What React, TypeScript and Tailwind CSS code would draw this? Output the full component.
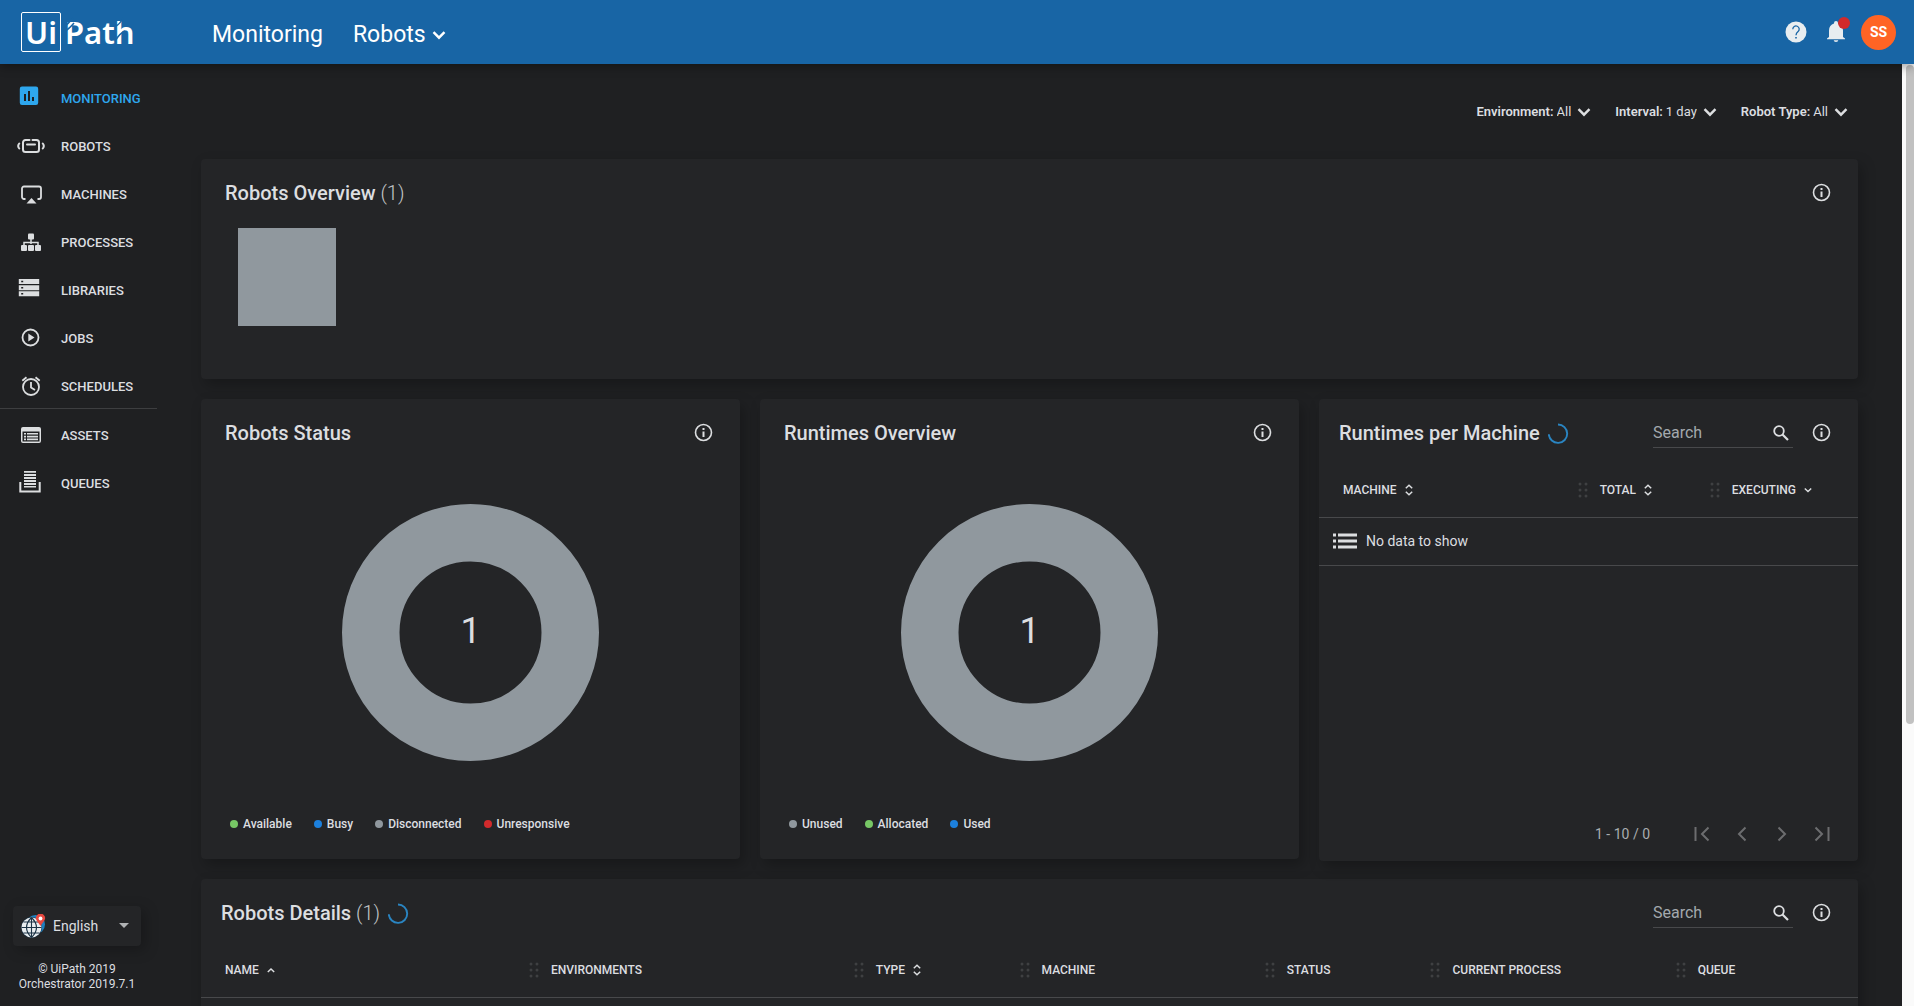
import type { ReactNode } from "react";

type Sort = "none" | "both" | "asc" | "desc";

type Column = {
	label: string;
	width: string;
	sort: Sort;
};

const machineColumns: Column[] = [
	{ label: "MACHINE", width: "w-[48%]", sort: "both" },
	{ label: "TOTAL", width: "w-[24.5%]", sort: "both" },
	{ label: "EXECUTING", width: "w-[27.5%]", sort: "desc" },
];

const robotColumns: Column[] = [
	{ label: "NAME", width: "w-[19.8%]", sort: "asc" },
	{ label: "ENVIRONMENTS", width: "w-[19.6%]", sort: "none" },
	{ label: "TYPE", width: "w-[10%]", sort: "both" },
	{ label: "MACHINE", width: "w-[14.8%]", sort: "none" },
	{ label: "STATUS", width: "w-[10%]", sort: "none" },
	{ label: "CURRENT PROCESS", width: "w-[14.8%]", sort: "none" },
	{ label: "QUEUE", width: "w-[11%]", sort: "none" },
];

const statusLegend = [
	{ label: "Available", color: "bg-[#77c765]" },
	{ label: "Busy", color: "bg-[#1c80dd]" },
	{ label: "Disconnected", color: "bg-[#90989e]" },
	{ label: "Unresponsive", color: "bg-[#d12a2c]" },
];

const runtimesLegend = [
	{ label: "Unused", color: "bg-[#90989e]" },
	{ label: "Allocated", color: "bg-[#77c765]" },
	{ label: "Used", color: "bg-[#1c80dd]" },
];

const mainNav = [
	{
		label: "MONITORING",
		active: true,
		icon: (
			<path
				fillRule="evenodd"
				d="M5 1.500h14a2.200 2.200 0 0 1 2.200 2.200v14a2.200 2.200 0 0 1-2.200 2.200H5a2.200 2.200 0 0 1-2.200-2.200v-14A2.200 2.200 0 0 1 5 1.500zM7 9v7h2V9zm4-3v10h2V6zm4 6v4h2v-4z"
			/>
		),
	},
	{
		label: "ROBOTS",
		icon: (
			<g fill="none" stroke="currentColor" strokeWidth="2" strokeLinecap="round">
				<path d="M12.500 7H8.500a2.500 2.500 0 0 0-2.500 2.500v7A2.500 2.500 0 0 0 8.500 19h11a2.500 2.500 0 0 0 2.500-2.500v-7A2.500 2.500 0 0 0 19.500 7h-4" />
				<path d="M10 11.500h8" />
				<path d="M2.200 10.500q-2 2.500 0 5M25.800 10.500q2 2.500 0 5" />
			</g>
		),
	},
	{
		label: "MACHINES",
		icon: (
			<>
				<path
					d="M8.500 18H7a2 2 0 0 1-2-2V7.500a2 2 0 0 1 2-2h15a2 2 0 0 1 2 2V16a2 2 0 0 1-2 2h-1.500"
					fill="none"
					stroke="currentColor"
					strokeWidth="1.800"
				/>
				<path d="M14.500 17l5 5.500h-10z" />
			</>
		),
	},
	{
		label: "PROCESSES",
		icon: (
			<>
				<path
					d="M14 9v6M7 16v-2.500h14V16"
					fill="none"
					stroke="currentColor"
					strokeWidth="1.500"
				/>
				<rect x="11" y="4.500" width="6" height="6" rx="1" />
				<rect x="4" y="16" width="6" height="6" rx="1" />
				<rect x="11" y="16" width="6" height="6" rx="1" />
				<rect x="18" y="16" width="6" height="6" rx="1" />
			</>
		),
	},
	{
		label: "LIBRARIES",
		icon: (
			<path
				fillRule="evenodd"
				d="M1.800 2h20.400v5H1.800zm2.400 1.700v1.600h2V3.700zM1.800 8.200h20.400v5H1.800zm2.400 1.700v1.600h2V9.900zM1.800 14.300h20.400v5H1.800zm2.400 1.700v1.600h2V16z"
			/>
		),
	},
	{
		label: "JOBS",
		icon: (
			<>
				<circle
					cx="13.500"
					cy="12.500"
					r="8"
					fill="none"
					stroke="currentColor"
					strokeWidth="1.800"
				/>
				<path d="M11.300 8.500l6.200 4-6.200 4z" />
			</>
		),
	},
	{
		label: "SCHEDULES",
		icon: (
			<g fill="none" stroke="currentColor" strokeWidth="1.800">
				<circle cx="14" cy="14" r="8" />
				<path d="M14 9v5.500l4 2.500" />
				<path d="M5.300 7.800l4.200-3.500M22.700 7.800l-4.200-3.500" />
			</g>
		),
	},
];

const assetNav = [
	{
		label: "ASSETS",
		icon: (
			<>
				<path
					fillRule="evenodd"
					d="M6 5h16a2 2 0 0 1 2 2v12a2 2 0 0 1-2 2H6a2 2 0 0 1-2-2V7a2 2 0 0 1 2-2zM5.500 9.500v10h17v-10z"
				/>
				<path d="M7 11h2v1.600H7zm3 0h11v1.600H10zM7 13.800h2v1.600H7zm3 0h11v1.600H10zM7 16.600h2v1.600H7zm3 0h11v1.600H10z" />
			</>
		),
	},
	{
		label: "QUEUES",
		icon: (
			<path d="M7 1h12v1.800H7zm0 3h12v1.900H7zm0 3h12v1.900H7zm0 3h12v1.900H7zm0 3h12v1.900H7zm0 3h12v1.500H7zM2.300 12h2v8.500h17.400V12h2v10.500H2.300z" />
		),
	},
];

const filters = [
	{ id: "environment", label: "Environment:", value: "All" },
	{ id: "interval", label: "Interval:", value: "1 day" },
	{ id: "robot-type", label: "Robot Type:", value: "All" },
];

const pageButtons = [
	{ label: "First page", d: "M5.500 5v14M18.500 5.500L12 12l6.500 6.500" },
	{ label: "Previous page", d: "M15.500 5.500L9 12l6.500 6.500" },
	{ label: "Next page", d: "M8.500 5.500L15 12l-6.500 6.500" },
	{ label: "Last page", d: "M18.500 5v14M5.500 5.500L12 12l-6.500 6.500" },
];

function ChevronDown() {
	return (
		<svg
			className="shrink-0 pointer-events-none"
			width="14"
			height="14"
			viewBox="0 0 14 14"
			fill="none"
			aria-hidden="true"
		>
			<path d="M1.500 4.200L7 9.700l5.500-5.500" stroke="currentColor" strokeWidth="2.400" />
		</svg>
	);
}

function SortIcon({ sort }: { sort: Sort }) {
	if (sort === "none") return null;
	return (
		<svg
			width="12"
			height="12"
			viewBox="0 0 12 12"
			fill="none"
			stroke="currentColor"
			strokeWidth="1.500"
			aria-hidden="true"
		>
			{sort === "both" && <path d="M2.800 4.300L6 1.300l3.200 3M2.800 7.700l3.200 3 3.200-3" />}
			{sort === "asc" && <path d="M2.800 8L6 5l3.200 3" />}
			{sort === "desc" && <path d="M2.800 4.500L6 7.500l3.200-3" />}
		</svg>
	);
}

function DragHandle() {
	return (
		<svg
			className="text-[#3f4042]"
			width="10"
			height="16"
			viewBox="0 0 10 16"
			fill="currentColor"
			aria-hidden="true"
		>
			{[2, 8, 14].map((y) => (
				<g key={y}>
					<circle cx="2" cy={y} r="1.500" />
					<circle cx="8" cy={y} r="1.500" />
				</g>
			))}
		</svg>
	);
}

function Spinner() {
	return (
		<svg width="22" height="22" viewBox="0 0 22 22" fill="none" aria-label="Loading">
			<path d="M10 1.500a9.200 9.200 0 1 1-9.200 9.800" stroke="#2a85c2" strokeWidth="1.900" />
		</svg>
	);
}

function InfoButton() {
	return (
		<button type="button" aria-label="Info" className="flex items-center justify-center w-6 h-6">
			<svg width="20" height="20" viewBox="0 0 20 20" aria-hidden="true">
				<circle cx="9.500" cy="9.500" r="8" fill="none" stroke="currentColor" strokeWidth="1.600" />
				<path d="M8.500 8.500h2v5.500h-2zM8.500 5h2v2h-2z" fill="currentColor" />
			</svg>
		</button>
	);
}

function SearchBox({ id }: { id: string }) {
	return (
		<div className="flex items-center w-[140px] h-[30px] pr-[3px] border-b border-[#48494b]">
			<input
				id={id}
				type="text"
				placeholder="Search"
				aria-label="Search"
				className="min-w-0 flex-1 bg-transparent text-base leading-6 outline-none placeholder:text-[#a3a9ad]"
			/>
			<svg width="18" height="18" viewBox="0 0 18 18" fill="none" aria-hidden="true">
				<circle cx="7" cy="7" r="4.800" stroke="currentColor" strokeWidth="1.800" />
				<path d="M10.500 10.500l5.500 5.500" stroke="currentColor" strokeWidth="2.200" />
			</svg>
		</div>
	);
}

function Panel({
	title,
	count,
	loading,
	searchId,
	className,
	children,
}: {
	title: string;
	count?: number;
	loading?: boolean;
	searchId?: string;
	className: string;
	children: ReactNode;
}) {
	return (
		<section
			className={`flex flex-col rounded bg-[#242527] shadow-[4px_6px_14px_rgba(0,0,0,0.25)] ${className}`}
		>
			<header
				className={`flex items-center h-12 mt-[10px] pr-6 ${searchId ? "pl-5" : "pl-6"}`}
			>
				<h2 className="text-xl leading-6 font-medium">
					{title}
					{count !== undefined && (
						<span className="font-light text-[#c3c5c7]"> ({count})</span>
					)}
				</h2>
				{loading && (
					<span className="ml-2 mt-0.5">
						<Spinner />
					</span>
				)}
				<div className="flex items-center gap-[17px] ml-auto">
					{searchId && <SearchBox id={searchId} />}
					<InfoButton />
				</div>
			</header>
			{children}
		</section>
	);
}

function TableHead({ columns }: { columns: Column[] }) {
	return (
		<thead>
			<tr className="h-[60px] border-b border-[#48494b]">
				{columns.map((col, i) => (
					<th
						key={col.label}
						scope="col"
						className={`p-0 pt-[7px] text-left text-xs font-medium ${col.width}`}
					>
						<div className={`flex items-center ${i === 0 ? "pl-6" : ""}`}>
							{i > 0 && (
								<span className="mr-3">
									<DragHandle />
								</span>
							)}
							<span className="mr-1.5 whitespace-nowrap">{col.label}</span>
							<SortIcon sort={col.sort} />
						</div>
					</th>
				))}
			</tr>
		</thead>
	);
}

function Donut({ value }: { value: number }) {
	return (
		<div className="grid place-items-center mt-[47px]">
			<svg
				className="col-start-1 row-start-1"
				width="258"
				height="258"
				viewBox="0 0 258 258"
				aria-hidden="true"
			>
				<circle cx="128.500" cy="128.500" r="99.750" fill="none" stroke="#90989e" strokeWidth="57.500" />
			</svg>
			<span className="col-start-1 row-start-1 pb-1 text-4xl">{value}</span>
		</div>
	);
}

function Legend({ items }: { items: { label: string; color: string }[] }) {
	return (
		<ul className="flex gap-[22px] mt-auto mb-[27px] ml-[29px] text-xs leading-4 font-medium">
			{items.map((item) => (
				<li key={item.label} className="flex items-center gap-[5px]">
					<span className={`w-2 h-2 rounded-full ${item.color}`} />
					{item.label}
				</li>
			))}
		</ul>
	);
}

function NavItem({
	label,
	icon,
	active,
}: {
	label: string;
	icon: ReactNode;
	active?: boolean;
}) {
	return (
		<li>
			<a
				href="#"
				className={`flex items-center gap-4 h-12 pt-1.5 pl-[17px] text-[13px] font-medium ${active ? "text-[#2ea7ee]" : ""}`}
			>
				<svg
					width="28"
					height="28"
					viewBox="0 0 28 28"
					fill="currentColor"
					aria-hidden="true"
				>
					{icon}
				</svg>
				{label}
			</a>
		</li>
	);
}

function Logo() {
	return (
		<a
			href="#"
			className="relative flex items-center h-10 text-[31px] leading-10 font-semibold font-['Noto_Sans',sans-serif]"
		>
			<span className="flex items-center justify-center w-10 h-10 rounded-xs border border-white">
				Ui
			</span>
			<span className="ml-1">Path</span>
			<svg
				className="absolute left-10 top-0"
				width="76"
				height="40"
				viewBox="0 0 76 40"
				stroke="#1865a5"
				strokeWidth="1.500"
				aria-hidden="true"
			>
				<path d="M4 14q3-2 8-8M4 19q4-2 9-8M55 14q4-2 7-8M55 28q3-6 9-9" fill="none" />
			</svg>
		</a>
	);
}

function Header() {
	return (
		<header className="relative z-10 flex items-center h-16 shrink-0 bg-[#1865a5] text-white pl-[21px] pr-[18px] shadow-[0_2px_10px_rgba(0,0,0,0.4)]">
			<div className="w-[191px] shrink-0">
				<Logo />
			</div>
			<div className="flex items-center gap-[30px] pt-1.5 text-[23px] leading-7">
				<h1>Monitoring</h1>
				<button type="button" className="flex items-center gap-1.5">
					Robots
					<ChevronDown />
				</button>
			</div>
			<div className="flex items-center ml-auto">
				<button type="button" aria-label="Help" className="mr-4 text-[#e8edf0]">
					<svg width="24" height="24" viewBox="0 0 24 24" aria-hidden="true">
						<circle cx="12" cy="12" r="10.500" fill="currentColor" />
						<path
							d="M8.800 9.300a3.200 3.200 0 1 1 5.300 2.300c-1.300 1.100-2.100 1.800-2.100 3.700"
							fill="none"
							stroke="#1865a5"
							strokeWidth="1.300"
						/>
						<path d="M11.200 17h1.600v1.600h-1.600z" fill="#1865a5" />
					</svg>
				</button>
				<button type="button" aria-label="Notifications" className="relative mr-[13px] text-[#e8edf0]">
					<svg width="24" height="24" viewBox="0 0 24 24" fill="currentColor" aria-hidden="true">
						<path d="M12 22c1.300 0 2.200-.7 2.200-1.700H9.800c0 1 .9 1.700 2.200 1.700zM19 17V10.500c0-3.500-1.900-6.100-5-6.900V3a2 2 0 0 0-4 0v.6c-3.100.8-5 3.400-5 6.900V17l-2 1.500v.8h18v-.8z" />
					</svg>
					<span className="absolute -top-[3px] -right-0.5 w-3 h-3 rounded-full bg-[#d12a2c]" />
				</button>
				<button
					type="button"
					aria-label="Account"
					className="w-[35px] h-[35px] rounded-full bg-[#ff6424] text-sm font-bold"
				>
					SS
				</button>
			</div>
		</header>
	);
}

function Sidebar() {
	return (
		<aside className="flex flex-col w-[157px] shrink-0 pt-2 pb-[14px]">
			<nav>
				<ul className="border-b border-[#3d3e40]">
					{mainNav.map((item) => (
						<NavItem key={item.label} {...item} />
					))}
				</ul>
				<ul>
					{assetNav.map((item) => (
						<NavItem key={item.label} {...item} />
					))}
				</ul>
			</nav>
			<div className="relative mt-auto mx-[13px] w-32 h-10 rounded bg-[#242527] shadow-[4px_4px_14px_rgba(0,0,0,0.25)]">
				<svg
					className="absolute left-2 top-2 pointer-events-none"
					width="25"
					height="25"
					viewBox="0 0 25 25"
					aria-hidden="true"
				>
					<circle cx="14.500" cy="10.500" r="9.500" fill="#1d7fbd" />
					<circle cx="10.500" cy="13.500" r="10.500" fill="#1c3345" />
					<circle cx="10.500" cy="13.500" r="10" fill="#e9edf0" />
					<path
						d="M10.500 3.500v20M.5 13.500h20M2.500 8h16M2.500 19h16M10.500 3.500q-10 10 0 20M10.500 3.500q10 10 0 20"
						fill="none"
						stroke="#1c3345"
						strokeWidth="1.100"
					/>
					<path d="M19.500 12L15.800 6.700a4.500 4.500 0 1 1 7.400 0z" fill="#e8483f" />
					<circle cx="19.500" cy="4.500" r="1.900" fill="#fff" />
				</svg>
				<select
					id="language"
					aria-label="Language"
					className="w-full h-full pl-10 appearance-none bg-transparent text-sm outline-none"
				>
					<option>English</option>
				</select>
				<svg
					className="absolute right-3 top-[17px] pointer-events-none text-[#b0b2b4]"
					width="10"
					height="5"
					viewBox="0 0 10 5"
					fill="currentColor"
					aria-hidden="true"
				>
					<path d="M0 0h10L5 5z" />
				</svg>
			</div>
			<p className="mt-4 pr-[3px] text-xs leading-[15px] text-center">
				© UiPath 2019
				<br />
				Orchestrator 2019.7.1
			</p>
		</aside>
	);
}

function Paginator() {
	return (
		<div className="flex items-center justify-end h-[54px] mt-auto pr-4 text-sm text-[#a9adb0]">
			<span className="mr-8">1 - 10 / 0</span>
			{pageButtons.map((b) => (
				<button
					key={b.label}
					type="button"
					aria-label={b.label}
					className="flex items-center justify-center w-10 h-10 text-[#6c6d6f]"
				>
					<svg width="24" height="24" viewBox="0 0 24 24" fill="none" aria-hidden="true">
						<path d={b.d} stroke="currentColor" strokeWidth="2" />
					</svg>
				</button>
			))}
		</div>
	);
}

export default function App() {
	return (
		<div className="flex flex-col h-screen overflow-hidden bg-[#1f2022] text-[#dcdee0] font-['Roboto',sans-serif]">
			<Header />
			<div className="flex flex-1 min-h-0">
				<Sidebar />
				<main className="flex-1 min-w-0 overflow-hidden px-11">
					<div className="flex items-center justify-end gap-6 h-[95px] pr-[10px] text-[13px]">
						{filters.map((f) => (
							<div key={f.id} className="flex items-center">
								<label htmlFor={f.id} className="mr-[3px] font-semibold">
									{f.label}
								</label>
								<select
									id={f.id}
									className="mr-1.5 appearance-none field-sizing-content bg-transparent outline-none"
								>
									<option>{f.value}</option>
								</select>
								<ChevronDown />
							</div>
						))}
					</div>

					<Panel title="Robots Overview" count={1} className="h-[220px]">
						<div className="ml-[37px] mt-[11px] w-[98px] h-[98px] bg-[#90989e]" />
					</Panel>

					<div className="grid grid-cols-3 items-start gap-5 mt-5">
						<Panel title="Robots Status" className="h-[460px]">
							<Donut value={1} />
							<Legend items={statusLegend} />
						</Panel>
						<Panel title="Runtimes Overview" className="h-[460px]">
							<Donut value={1} />
							<Legend items={runtimesLegend} />
						</Panel>
						<Panel
							title="Runtimes per Machine"
							loading
							searchId="search-machines"
							className="h-[462px]"
						>
							<table className="w-full table-fixed border-collapse">
								<TableHead columns={machineColumns} />
								<tbody>
									<tr className="h-12 border-b border-[#48494b]">
										<td colSpan={3} className="p-0 text-sm">
											<div className="flex items-center gap-[9px] pl-[14px]">
												<svg
													width="24"
													height="16"
													viewBox="0 0 24 16"
													fill="currentColor"
													aria-hidden="true"
												>
													<path d="M0 .5h3v3H0zm5 0h19v3H5zM0 6.500h3v3H0zm5 0h19v3H5zM0 12.500h3v3H0zm5 0h19v3H5z" />
												</svg>
												No data to show
											</div>
										</td>
									</tr>
								</tbody>
							</table>
							<Paginator />
						</Panel>
					</div>

					<Panel
						title="Robots Details"
						count={1}
						loading
						searchId="search-robots"
						className="mt-[18px] h-[300px]"
					>
						<table className="w-full table-fixed border-collapse">
							<TableHead columns={robotColumns} />
						</table>
					</Panel>
				</main>
				<div className="w-3 shrink-0 bg-[#fafafa] pl-1 pt-px" aria-hidden="true">
					<div className="h-[70%] rounded-full bg-[#c1c1c1]" />
				</div>
			</div>
		</div>
	);
}
